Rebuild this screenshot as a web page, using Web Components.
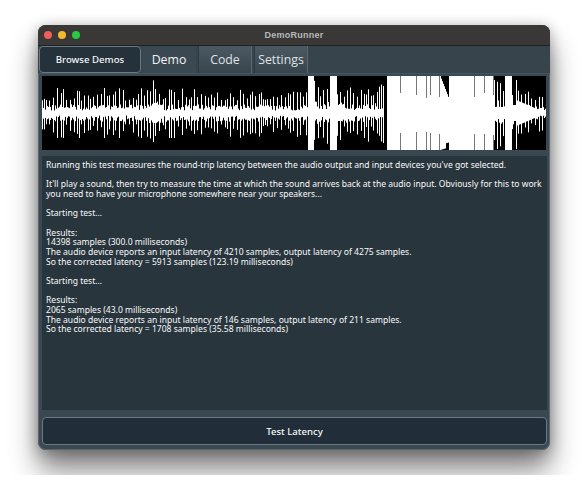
<!DOCTYPE html>
<html>
<head>
<meta charset="utf-8">
<title>DemoRunner</title>
<style>
    html, body { margin: 0; background: #fff; }
    body { padding: 25px 38px 0; height: 475px; box-sizing: border-box; overflow: hidden; font-family: "Noto Sans", sans-serif; }
</style>
</head>
<body>
<demo-window title="DemoRunner">
    <tab-bar>
        <browse-button>Browse Demos</browse-button>
        <demo-tab active>Demo</demo-tab>
        <demo-tab>Code</demo-tab>
        <demo-tab>Settings</demo-tab>
    </tab-bar>
    <wave-form></wave-form>
    <log-panel>Running this test measures the round-trip latency between the audio output and input devices you've got selected.

It'll play a sound, then try to measure the time at which the sound arrives back at the audio input. Obviously for this to work
you need to have your microphone somewhere near your speakers...

Starting test...

Results:
14398 samples (300.0 milliseconds)
The audio device reports an input latency of 4210 samples, output latency of 4275 samples.
So the corrected latency = 5913 samples (123.19 milliseconds)

Starting test...

Results:
2065 samples (43.0 milliseconds)
The audio device reports an input latency of 146 samples, output latency of 211 samples.
So the corrected latency = 1708 samples (35.58 milliseconds)</log-panel>
    <action-button>Test Latency</action-button>
</demo-window>

<script>
class DemoWindow extends HTMLElement {
    constructor() {
        super();
        this.attachShadow({ mode: 'open' });
    }

    connectedCallback() {
        this.shadowRoot.innerHTML = `
            <style>
                :host {
                    display: flex;
                    flex-direction: column;
                    width: 512px;
                    height: 425px;
                    border-radius: 8px;
                    background: #3a4851;
                    box-shadow: 0 0 0 1px #5b666e inset, 0 20px 28px rgba(0,0,0,.48), 0 2px 14px rgba(0,0,0,.3);
                    overflow: hidden;
                }
                .title {
                    flex: none;
                    height: 20px;
                    position: relative;
                    display: flex;
                    align-items: center;
                    justify-content: center;
                    background: #393837;
                    border-bottom: 1px solid #1f2224;
                    color: #b8b8b8;
                    font: bold 9px "Liberation Sans", sans-serif;
                    letter-spacing: .25px;
                }
                .lights {
                    position: absolute;
                    left: 6px;
                    top: 6px;
                    display: flex;
                    gap: 6px;
                }
                .lights i {
                    width: 8px;
                    height: 8px;
                    border-radius: 50%;
                }
                .body {
                    flex: 1;
                    display: flex;
                    flex-direction: column;
                    min-height: 0;
                }
            </style>
            <div class="title">
                <div class="lights">
                    <i style="background:#ee5f57"></i><i style="background:#f5b82e"></i><i style="background:#2ac940"></i>
                </div>
                <span>${this.getAttribute('title')}</span>
            </div>
            <div class="body"><slot></slot></div>
        `;
    }
}

class TabBar extends HTMLElement {
    constructor() {
        super();
        this.attachShadow({ mode: 'open' });
    }

    connectedCallback() {
        this.shadowRoot.innerHTML = `
            <style>
                :host {
                    flex: none;
                    display: flex;
                    height: 27px;
                    padding-left: 1px;
                    background: #37444c;
                    border-bottom: 1px solid #47545d;
                }
            </style>
            <slot></slot>
        `;
    }
}

class BrowseButton extends HTMLElement {
    constructor() {
        super();
        this.attachShadow({ mode: 'open' });
    }

    connectedCallback() {
        this.shadowRoot.innerHTML = `
            <style>
                :host {
                    display: flex;
                    align-items: center;
                    justify-content: center;
                    width: 102px;
                    height: 27px;
                    box-sizing: border-box;
                    margin-right: 1px;
                    border: 1px solid #6a7982;
                    border-radius: 4px;
                    background: #25323c;
                    color: #f6f7f8;
                    font: 500 9.6px "Noto Sans", sans-serif;
                }
            </style>
            <slot></slot>
        `;
    }
}

class DemoTab extends HTMLElement {
    constructor() {
        super();
        this.attachShadow({ mode: 'open' });
    }

    connectedCallback() {
        this.shadowRoot.innerHTML = `
            <style>
                :host {
                    display: flex;
                    align-items: center;
                    justify-content: center;
                    width: 54px;
                    height: 27px;
                    margin-right: 2px;
                    box-sizing: border-box;
                    background: linear-gradient(#4c5962, #38454d);
                    border-right: 1px solid #5a6870;
                    border-left: 1px solid #2f3b43;
                    color: #dfe3e5;
                    font: 12.3px "Open Sans", sans-serif;
                }
                :host([active]) {
                    background: #3a4851;
                    border-color: transparent;
                    color: #f4f5f6;
                }
            </style>
            <slot></slot>
        `;
    }
}

class WaveForm extends HTMLElement {
    constructor() {
        super();
        this.attachShadow({ mode: 'open' });
    }

    connectedCallback() {
        const W = 504, H = 74, mid = H / 2;
        let seed = 11;
        const rnd = () => (seed = (seed * 16807) % 2147483647) / 2147483647;
        const greyLines = [358, 374, 384, 388, 397, 432, 442, 451];
        let white = '', grey = '', nextPeak = 0;
        const col = (x, up, down) => {
            white += `M${x + .5} ${(mid - up).toFixed(1)}V${(mid + down).toFixed(1)}`;
        };
        const spiky = (x, amp, core) => {
            let up = 0.1 + rnd() * 0.25, down = 0.1 + rnd() * 0.25;
            if (x >= nextPeak) {
                // peaks are not evenly spaced, 2 to 4 columns apart
                nextPeak = x + 2 + Math.floor(rnd() * 3);
                up = 0.5 + 0.5 * Math.pow(rnd(), 1.3);
                down = Math.min(1, Math.max(0.45, up + (rnd() - 0.5) * 0.4));
            }
            col(x, Math.max(core, amp * up), Math.max(core, amp * down));
        };
        for (let x = 0; x < W; x++) {
            if (x < 266) {
                // quiet noise with the one louder hit near the middle of it
                const hit = Math.max(0, 1 - Math.abs(x - 113) / 10);
                spiky(x, 25 + hit * 12, 2 + hit * 9);
            } else if (x < 272 || (x >= 288 && x < 295)) {
                col(x, 37, 37);
            } else if (x < 288) {
                spiky(x, x < 277 || x > 283 ? 35 : 26, 4);
            } else if (x < 342) {
                spiky(x, 30, x < 300 ? 8 : 2.5);
            } else if (x < 345) {
                continue;
            } else if (x < 398) {
                col(x, 37, 37);
            } else if (x < 407) {
                // the wedge after the long loud section
                const t = x - 398;
                col(x, 37 - t * 2.6, 37 - (t > 5 ? 5 : 0) - t * 0.3);
            } else if (x < 452) {
                col(x, 37, 37);
            } else if (x < 463) {
                spiky(x, 36, 6);
            } else if (x < 470) {
                col(x, 37, 37);
            } else if (x < 475) {
                spiky(x, 36, 8);
            } else {
                const t = (x - 475) / 28;
                spiky(x, 30 - t * 14, 12 * (1 - t) + .5);
            }
        }
        greyLines.forEach(x => {
            grey += `M${x + .5} 0V${16 + x % 7}M${x + .5} ${H}V${H - 14 - x % 5}`;
        });
        this.shadowRoot.innerHTML = `
            <style>
                :host {
                    flex: none;
                    display: block;
                    height: 74px;
                    margin: 2px 4px 6px;
                    background: #000;
                    overflow: hidden;
                }
                svg {
                    display: block;
                    filter: blur(.45px);
                }
            </style>
            <svg width="${W}" height="${H}" viewBox="0 0 ${W} ${H}">
                <path d="${white}" stroke="#fff" stroke-width="1" fill="none"/>
                <path d="${grey}" stroke="#777" stroke-width="1" fill="none"/>
            </svg>
        `;
    }
}

class LogPanel extends HTMLElement {
    constructor() {
        super();
        this.attachShadow({ mode: 'open' });
    }

    connectedCallback() {
        this.shadowRoot.innerHTML = `
            <style>
                :host {
                    flex: 1;
                    display: block;
                    min-height: 0;
                    margin: 0 3px 7px 4px;
                    padding: 5px 4px 0;
                    background: #29353d;
                    color: #f8f9fa;
                    font: 8.55px/9.67px "Noto Sans", sans-serif;
                    overflow: hidden;
                }
                div {
                    white-space: pre;
                }
            </style>
            <div><slot></slot></div>
        `;
    }
}

class ActionButton extends HTMLElement {
    constructor() {
        super();
        this.attachShadow({ mode: 'open' });
    }

    connectedCallback() {
        this.shadowRoot.innerHTML = `
            <style>
                :host {
                    flex: none;
                    display: flex;
                    align-items: center;
                    justify-content: center;
                    height: 28px;
                    margin: 0 3px 5px 4px;
                    box-sizing: border-box;
                    border: 1px solid #6a7982;
                    border-radius: 4px;
                    background: #212e39;
                    color: #f6f7f8;
                    font: 500 9.6px "Noto Sans", sans-serif;
                }
            </style>
            <slot></slot>
        `;
    }
}

customElements.define('demo-window', DemoWindow);
customElements.define('tab-bar', TabBar);
customElements.define('browse-button', BrowseButton);
customElements.define('demo-tab', DemoTab);
customElements.define('wave-form', WaveForm);
customElements.define('log-panel', LogPanel);
customElements.define('action-button', ActionButton);
</script>
</body>
</html>
